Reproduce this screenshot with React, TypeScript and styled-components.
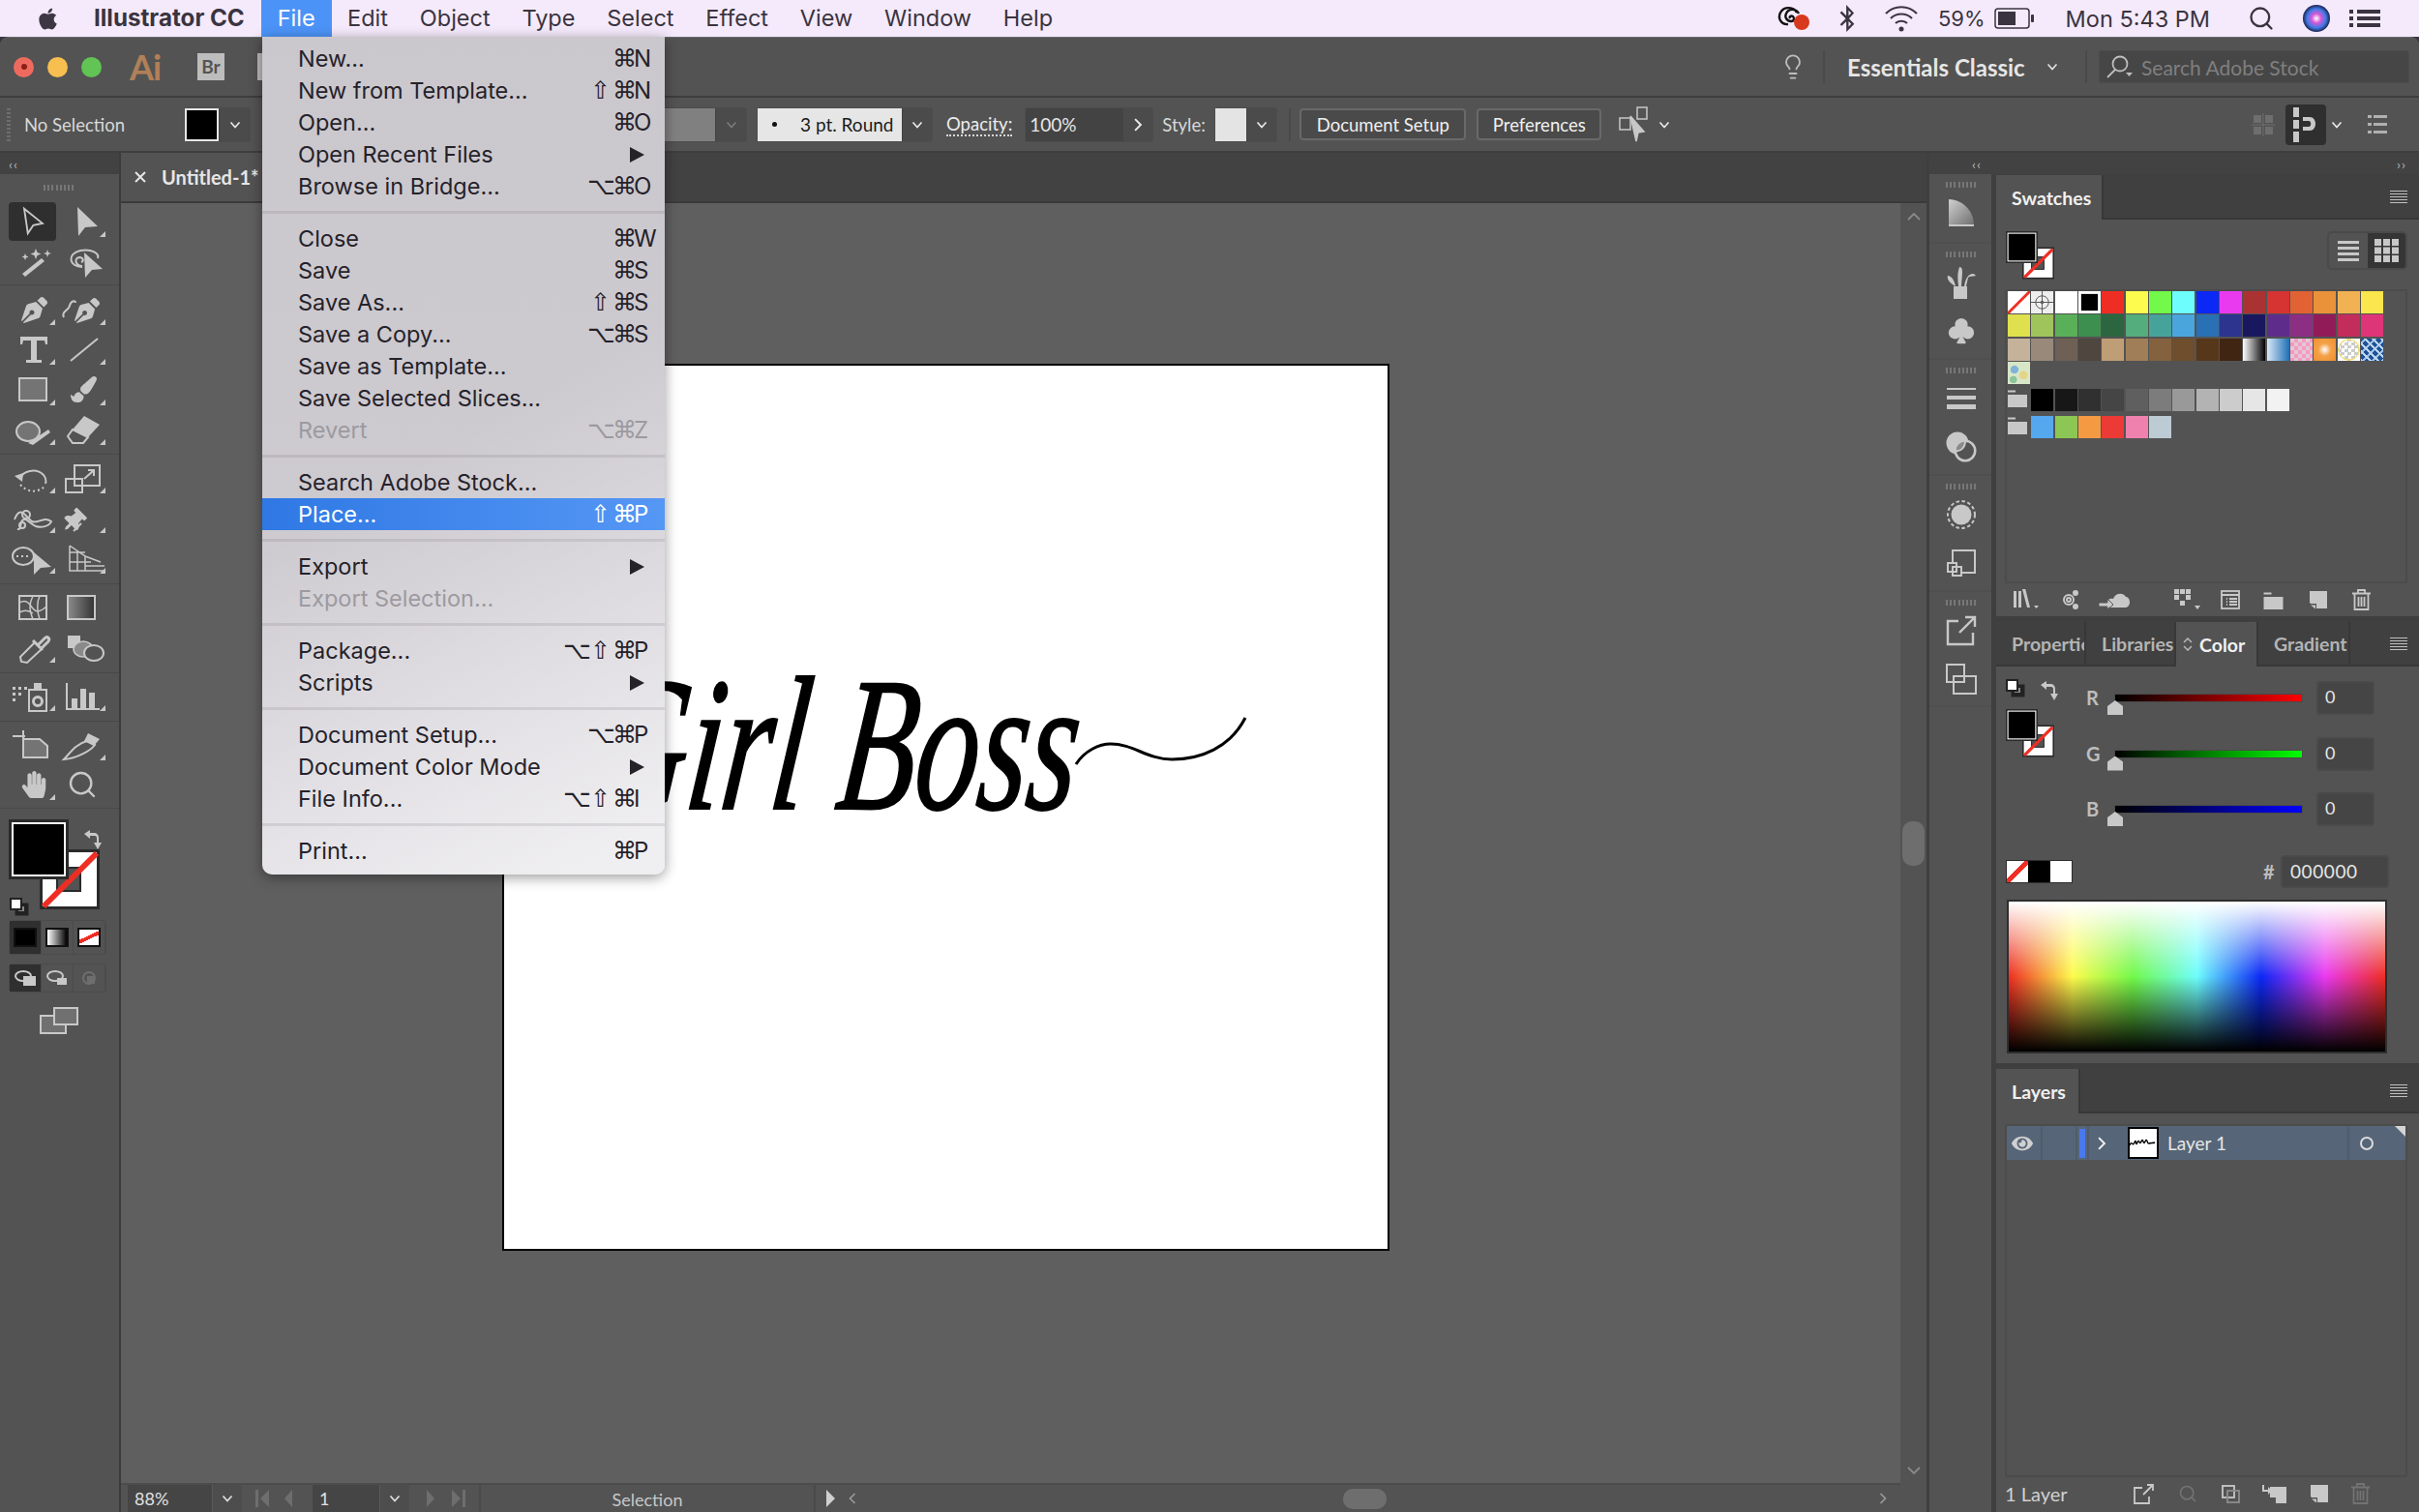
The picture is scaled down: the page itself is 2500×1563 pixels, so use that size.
import React from 'react';
import styled, { createGlobalStyle } from 'styled-components';
import { FaApple, FaBluetoothB, FaHandPaper, FaPaintBrush, FaPenNib, FaThumbtack, FaEye } from 'react-icons/fa';
import { BsSuitClubFill } from 'react-icons/bs';
import { Search, Lightbulb } from 'lucide-react';

const ui = `"Lato", "Noto Sans", sans-serif`;
const mac = `"Inter", "Liberation Sans", sans-serif`;
const ICON = '#c8c8c8';

const GlobalStyle = createGlobalStyle`
  html, body { margin: 0; padding: 0; background: #3b3640; overflow: hidden; }
  * { box-sizing: border-box; }
`;

const Screen = styled.div`
  position: relative;
  width: 2500px;
  height: 1563px;
  display: flex;
  flex-direction: column;
  overflow: hidden;
  font-family: ${ui};
`;

/* ---- mac menu bar ---- */
const MenuBar = styled.div`
  height: 38px;
  flex: none;
  display: flex;
  align-items: center;
  background: #f5eafb;
  color: #3a3440;
  font-family: ${mac};
  font-size: 23.5px;
  padding-left: 37px;
`;
const MenuTitle = styled.div<{ $bold?: boolean; $open?: boolean }>`
  height: 38px;
  line-height: 37px;
  padding: 0 ${(p) => (p.$open ? 17 : 16.4)}px;
  font-weight: ${(p) => (p.$bold ? 700 : 400)};
  color: ${(p) => (p.$open ? '#fff' : 'inherit')};
  background: ${(p) => (p.$open ? '#4c93f7' : 'transparent')};
`;
const AppName = styled(MenuTitle)`
  padding: 0 17px 0 35px;
  font-size: 24.2px;
`;
const StatusItems = styled.div`
  margin-left: auto;
  display: flex;
  align-items: center;
  height: 38px;
`;
const StatusSlot = styled.div<{ $ml: number }>`
  margin-left: ${(p) => p.$ml}px;
  display: flex;
  align-items: center;
`;
const BatteryPct = styled(StatusSlot)`
  font-size: 22px;
`;

/* ---- application window ---- */
const AppWindow = styled.div`
  flex: 1;
  display: flex;
  flex-direction: column;
  background: #535353;
  border-radius: 9px 9px 0 0;
  overflow: hidden;
  min-height: 0;
  border-top: 1px solid #6a6a6a;
`;
const TitleBar = styled.div`
  height: 62px;
  flex: none;
  display: flex;
  align-items: center;
  border-bottom: 2px solid #3e3e3e;
  padding-left: 14px;
`;
const Light = styled.div<{ $c: string }>`
  width: 21px;
  height: 21px;
  border-radius: 50%;
  background: ${(p) => p.$c};
  margin-right: 14px;
  display: flex;
  align-items: center;
  justify-content: center;
  &::after {
    content: '';
    width: 6px;
    height: 6px;
    border-radius: 50%;
    background: ${(p) => (p.$c === '#ef6a5e' ? '#8a1f18' : 'transparent')};
  }
`;
const AiMark = styled.div`
  font-size: 36px;
  font-weight: 700;
  color: #b08059;
  margin-left: 15px;
  width: 30px;
  letter-spacing: -1px;
`;
const BrBox = styled.div<{ $ml: number }>`
  margin-left: ${(p) => p.$ml}px;
  width: 28px;
  height: 28px;
  background: #bdbdbd;
  color: #555;
  font-size: 19px;
  font-weight: 700;
  text-align: center;
  line-height: 28px;
`;
const TitleRight = styled.div`
  margin-left: auto;
  display: flex;
  align-items: center;
  height: 100%;
  padding-right: 10px;
  color: #bdbdbd;
`;
const VRule = styled.div`
  width: 2px;
  height: 34px;
  background: #4a4a4a;
`;
const Workspace = styled.div`
  margin: 0 17px 0 23px;
  font-size: 24px;
  font-weight: 700;
  color: #e6e6e6;
  width: 189px;
  white-space: nowrap;
`;
const SearchStock = styled.div`
  margin-left: 12px;
  width: 321px;
  height: 34px;
  background: #464646;
  border: 1px solid #4c4c4c;
  border-radius: 3px;
  display: flex;
  align-items: center;
  padding-left: 6px;
  font-size: 21px;
  color: #7f7f7f;
`;
const ControlBar = styled.div`
  height: 57px;
  flex: none;
  display: flex;
  align-items: center;
  border-bottom: 2px solid #3e3e3e;
  font-size: 18.5px;
  color: #d8d8d8;
  position: relative;
`;
const GripV = styled.div`
  margin-left: 7px;
  width: 4px;
  height: 34px;
  background: repeating-linear-gradient(to bottom, #6e6e6e 0 2px, transparent 2px 4px);
`;
const PlainLabel = styled.div<{ $ml: number; $w?: number; $dotted?: boolean }>`
  margin-left: ${(p) => p.$ml}px;
  width: ${(p) => (p.$w ? `${p.$w}px` : 'auto')};
  white-space: nowrap;
  ${(p) => (p.$dotted ? 'border-bottom: 2px dotted #d8d8d8; color:#ececec; line-height: 22px;' : '')}
`;
const ComboBox = styled.div<{ $ml: number; $w: number }>`
  margin-left: ${(p) => p.$ml}px;
  width: ${(p) => p.$w}px;
  height: 36px;
  display: flex;
  align-items: stretch;
  background: #4b4b4b;
  border: 1px solid #4d4d4d;
  border-radius: 3px;
  flex: none;
`;
const ComboFill = styled.div<{ $c: string; $border?: string }>`
  flex: 1;
  background: ${(p) => p.$c};
  ${(p) => (p.$border ? `border: 2px solid ${p.$border};` : '')}
`;
const ComboValue = styled.div<{ $light?: boolean }>`
  flex: 1;
  display: flex;
  align-items: center;
  padding-left: ${(p) => (p.$light ? 15 : 4)}px;
  gap: 24px;
  background: ${(p) => (p.$light ? '#e6e6e6' : '#434343')};
  color: ${(p) => (p.$light ? '#1c1c1c' : '#e6e6e6')};
  font-size: 19px;
  white-space: nowrap;
`;
const Bullet = styled.span`
  width: 5px;
  height: 5px;
  border-radius: 50%;
  background: #111;
`;
const ComboBtn = styled.div<{ $w: number }>`
  width: ${(p) => p.$w}px;
  flex: none;
  display: flex;
  align-items: center;
  justify-content: center;
  border-left: 1px solid #444;
`;
const PushButton = styled.div<{ $ml: number; $w: number }>`
  margin-left: ${(p) => p.$ml}px;
  width: ${(p) => p.$w}px;
  height: 33px;
  flex: none;
  display: flex;
  align-items: center;
  justify-content: center;
  background: #4a4a4a;
  border: 2px solid #696969;
  border-radius: 4px;
  color: #f0f0f0;
  font-size: 18.5px;
`;
const ControlRight = styled.div`
  margin-left: auto;
  display: flex;
  align-items: center;
  padding-right: 33px;
`;
const AlignBox = styled.div`
  width: 42px;
  height: 42px;
  background: #2f2f2f;
  border-radius: 4px;
  margin: 0 5px 0 11px;
  display: flex;
  align-items: center;
  justify-content: center;
`;

const Body = styled.div`
  flex: 1;
  display: flex;
  min-height: 0;
`;

/* ---- left tools ---- */
const LeftDock = styled.div`
  width: 125px;
  flex: none;
  border-right: 2px solid #3c3c3c;
  display: flex;
  flex-direction: column;
`;
const CollapseStrip = styled.div<{ $end?: boolean }>`
  height: 22px;
  flex: none;
  background: #424242;
  display: flex;
  align-items: center;
  justify-content: ${(p) => (p.$end ? 'space-between' : 'flex-start')};
  padding: ${(p) => (p.$end ? '0 13px 0 44px' : '0 0 0 9px')};
  color: #b5b5b5;
  font-size: 14px;
  letter-spacing: 1px;
`;
const Grip = styled.div<{ $w: number; $h?: number }>`
  width: ${(p) => p.$w}px;
  height: ${(p) => p.$h ?? 6}px;
  background: repeating-linear-gradient(to right, #777 0 2px, transparent 2px 4.2px);
`;
const ToolGrip = styled.div`
  height: 28px;
  flex: none;
  display: flex;
  align-items: center;
  justify-content: center;
`;
const ToolGroup = styled.div<{ $pt: number; $pb: number }>`
  padding: ${(p) => p.$pt}px 9px ${(p) => p.$pb}px;
  border-bottom: 1px solid #484848;
`;
const ToolRow = styled.div`
  display: grid;
  grid-template-columns: 52px 52px;
  height: 41.5px;
  align-items: center;
`;
const ToolCell = styled.div<{ $active?: boolean }>`
  height: 40px;
  display: flex;
  align-items: center;
  border-radius: 4px;
  background: ${(p) => (p.$active ? '#2f2f2f' : 'transparent')};
  width: ${(p) => (p.$active ? '49px' : '52px')};
`;
const ColorWell = styled.div`
  position: relative;
  height: 102px;
  margin: 11px 0 0 9px;
`;
const WellOver = styled.div<{ $x: number; $y: number }>`
  position: absolute;
  left: ${(p) => p.$x}px;
  top: ${(p) => p.$y}px;
`;
const SegRow = styled.div<{ $h: number; $mt: number }>`
  height: ${(p) => p.$h}px;
  margin: ${(p) => p.$mt}px 13px 0 9px;
  display: grid;
  grid-template-columns: repeat(3, 1fr);
  border: 1px solid #4b4b4b;
  border-radius: 4px;
`;
const Seg = styled.div<{ $active?: boolean }>`
  display: flex;
  align-items: center;
  justify-content: center;
  background: ${(p) => (p.$active ? '#2f2f2f' : 'transparent')};
  border-right: 1px solid #4b4b4b;
`;
const SegChip = styled.div<{ $bg: string }>`
  width: 24px;
  height: 20px;
  background: ${(p) => p.$bg};
  border: 2px solid #111;
`;
const ScreenMode = styled.div`
  margin-top: 15px;
  display: flex;
  justify-content: center;
  padding-right: 2px;
`;

/* ---- centre ---- */
const Centre = styled.div`
  flex: 1;
  display: flex;
  flex-direction: column;
  min-width: 0;
`;
const DocTabs = styled.div`
  height: 52px;
  flex: none;
  background: #424242;
  border-bottom: 2px solid #3a3a3a;
  display: flex;
`;
const DocTab = styled.div`
  width: 200px;
  background: #535353;
  display: flex;
  align-items: center;
  padding-left: 14px;
  font-weight: 700;
  font-size: 20px;
  color: #e6e6e6;
  gap: 16px;
`;
const CanvasRow = styled.div`
  flex: 1;
  display: flex;
  min-height: 0;
`;
const CanvasCol = styled.div`
  flex: 1;
  display: flex;
  flex-direction: column;
  min-width: 0;
`;
const Canvas = styled.div`
  flex: 1;
  background: #5f5f5f;
  padding: 166px 0 0 394px;
  min-height: 0;
`;
const Artboard = styled.div`
  position: relative;
  width: 917px;
  height: 917px;
  background: #fff;
  border: 2px solid #000;
`;
const Lettering = styled.div`
  position: absolute;
  left: 112px;
  top: 268px;
  font-family: "Liberation Serif", serif;
  font-style: italic;
  font-size: 152px;
  line-height: 190px;
  color: #000;
  white-space: nowrap;
  transform-origin: left top;
  transform: scale(0.86, 1.3) skewX(-10deg);
  -webkit-text-stroke: 1.5px #000;
`;
const Flourish = styled.svg`
  position: absolute;
  left: 580px;
  top: 360px;
`;
const VScroll = styled.div`
  width: 27px;
  flex: none;
  background: #535353;
  display: flex;
  flex-direction: column;
  align-items: center;
  justify-content: space-between;
  padding: 7px 0 36px;
`;
const VThumb = styled.div`
  width: 23px;
  height: 46px;
  background: #6e6e6e;
  border-radius: 10px;
`;
const StatusBar = styled.div`
  height: 30px;
  flex: none;
  display: flex;
  align-items: stretch;
  background: #535353;
  border-top: 2px solid #4c4c4c;
  font-size: 18px;
  color: #e0e0e0;
`;
const StatusField = styled.div<{ $ml: number; $w: number }>`
  margin-left: ${(p) => p.$ml}px;
  width: ${(p) => p.$w}px;
  flex: none;
  background: #454545;
  display: flex;
  align-items: center;
  padding-left: 7px;
`;
const StatusChevron = styled.div`
  width: 31px;
  flex: none;
  display: flex;
  align-items: center;
  justify-content: center;
  border-left: 1px solid #5a5a5a;
  background: #4d4d4d;
`;
const StatusArrows = styled.div<{ $ml: number; $w: number }>`
  margin-left: ${(p) => p.$ml}px;
  width: ${(p) => p.$w}px;
  flex: none;
  display: flex;
  align-items: center;
`;
const StatusLabel = styled.div`
  margin-left: 14px;
  width: 348px;
  text-align: center;
  flex: none;
  color: #c8c8c8;
  line-height: 30px;
  border: solid #4a4a4a;
  border-width: 0 2px;
`;
const HScrollTrack = styled.div`
  flex: 1;
  display: flex;
  align-items: center;
  justify-content: center;
  padding-right: 6px;
`;
const HThumb = styled.div`
  width: 45px;
  height: 21px;
  background: #6e6e6e;
  border-radius: 10px;
`;

/* ---- right dock ---- */
const RightDock = styled.div`
  width: 509px;
  flex: none;
  display: flex;
  flex-direction: column;
  background: #3f3f3f;
  padding-left: 3px;
`;
const DockColumns = styled.div`
  flex: 1;
  display: flex;
  min-height: 0;
`;
const IconDock = styled.div`
  width: 64px;
  flex: none;
  margin-right: 5px;
  background: #4f4f4f;
  display: flex;
  flex-direction: column;
`;
const IconSection = styled.div<{ $h: number }>`
  height: ${(p) => p.$h}px;
  flex: none;
  background: #535353;
  padding: 8px 0 0 2px;
  margin-bottom: 2px;
  display: flex;
  flex-direction: column;
  align-items: center;
`;
const DockIcon = styled.div`
  height: 50px;
  display: flex;
  align-items: center;
  justify-content: center;
`;
const DockGrip = styled(Grip)`
  margin-bottom: 1px;
  height: 6px;
`;
const DockBlank = styled.div`
  flex: 1;
  background: #535353;
`;
const PanelStack = styled.div`
  flex: 1;
  display: flex;
  flex-direction: column;
  gap: 6px;
  padding-top: 1px;
`;
const Panel = styled.div<{ $h?: number }>`
  height: ${(p) => (p.$h ? `${p.$h}px` : 'auto')};
  flex: ${(p) => (p.$h ? 'none' : '1')};
  background: #535353;
  display: flex;
  flex-direction: column;
`;
const TabStrip = styled.div`
  height: 46px;
  flex: none;
  background: #404040;
  display: flex;
  align-items: stretch;
`;
const PanelTab = styled.div<{ $w: number; $active?: boolean; $pl?: number }>`
  width: ${(p) => p.$w}px;
  flex: none;
  display: flex;
  align-items: center;
  gap: 7px;
  overflow: hidden;
  white-space: nowrap;
  padding-left: ${(p) => p.$pl ?? 16}px;
  font-size: 19.5px;
  font-weight: 700;
  color: ${(p) => (p.$active ? '#f0f0f0' : '#b4b4b4')};
  background: ${(p) => (p.$active ? '#535353' : '#404040')};
  border-right: 2px solid #383838;
  border-bottom: ${(p) => (p.$active ? 'none' : '2px solid #383838')};
`;
const TabFill = styled.div`
  flex: 1;
  border-bottom: 2px solid #383838;
  display: flex;
  align-items: center;
  justify-content: flex-end;
  padding-right: 12px;
`;
const Hamburger = styled.div`
  width: 18px;
  height: 13px;
  background: repeating-linear-gradient(to bottom, #c0c0c0 0 1px, transparent 1px 3px);
`;

const SwatchHead = styled.div`
  display: flex;
  justify-content: space-between;
  padding: 12px 12px 0 10px;
  height: 72px;
`;
const ViewToggle = styled.div`
  width: 83px;
  height: 40px;
  display: grid;
  grid-template-columns: 1fr 1fr;
  border: 2px solid #4a4a4a;
  border-radius: 5px;
  overflow: hidden;
`;
const ViewBtn = styled.div<{ $active?: boolean }>`
  background: ${(p) => (p.$active ? '#353535' : 'transparent')};
  display: flex;
  align-items: center;
  justify-content: center;
`;
const SwatchList = styled.div`
  margin: 0 12px 0 9px;
  height: 305px;
  border: 2px solid #4c4c4c;
  padding: 0 0 0 1px;
`;
const SwatchGrid = styled.div`
  display: grid;
  grid-template-columns: repeat(16, 23px);
  grid-auto-rows: 23px;
  gap: 1.33px;
`;
const SwatchGroup = styled.div<{ $mt: number }>`
  display: grid;
  grid-template-columns: repeat(16, 23px);
  grid-auto-rows: 23px;
  gap: 1.33px;
  margin-top: ${(p) => p.$mt}px;
`;
const Swatch = styled.div<{ $c: string }>`
  background: ${(p) => p.$c};
  display: flex;
`;
const PanelFooter = styled.div<{ $pl: number }>`
  height: 34px;
  display: flex;
  align-items: center;
  padding-left: ${(p) => p.$pl}px;
  color: #d0d0d0;
  font-size: 20px;
`;
const FootSlot = styled.div<{ $ml: number }>`
  margin-left: ${(p) => p.$ml}px;
  display: flex;
  align-items: center;
`;

const ColorBody = styled.div`
  flex: 1;
  display: flex;
  flex-direction: column;
  padding: 4px 0 0 9px;
`;
const ColorTop = styled.div`
  display: flex;
  height: 172px;
`;
const ColorIcons = styled.div`
  position: relative;
  width: 84px;
  flex: none;
`;
const ColorIconAt = styled.div<{ $x: number; $y: number }>`
  position: absolute;
  left: ${(p) => p.$x}px;
  top: ${(p) => p.$y}px;
`;
const SliderRow = styled.div`
  height: 57.5px;
  display: flex;
  align-items: flex-start;
  padding-top: 11px;
`;
const ChannelLabel = styled.div`
  width: 30px;
  font-size: 20px;
  font-weight: 700;
  color: #bdbdbd;
  line-height: 34px;
`;
const SliderBox = styled.div`
  position: relative;
  width: 193px;
  padding-top: 14px;
`;
const SliderTrack = styled.div<{ $to: string }>`
  height: 7px;
  background: linear-gradient(to right, #000, ${(p) => p.$to});
  box-shadow: 0 0 0 1px #4a4a4a;
`;
const SliderThumb = styled.div`
  position: absolute;
  left: -8px;
  top: 20px;
  width: 16px;
  height: 15px;
  background: #c8c8c8;
  clip-path: polygon(50% 0, 100% 40%, 100% 100%, 0 100%, 0 40%);
`;
const NumBox = styled.div`
  margin-left: 15px;
  width: 60px;
  height: 35px;
  background: #454545;
  border: 2px solid #4a4a4a;
  border-radius: 4px;
  color: #e6e6e6;
  font-size: 18px;
  padding-left: 7px;
  line-height: 28px;
`;
const HexRow = styled.div`
  display: flex;
  align-items: center;
  height: 34px;
  margin-top: 19px;
`;
const TriChip = styled.div`
  width: 69px;
  height: 24px;
  display: grid;
  grid-template-columns: repeat(3, 1fr);
  border: 1px solid #2d2d2d;
  margin-left: 1px;
`;
const Chip = styled.div<{ $c: string }>`
  background: ${(p) => p.$c};
`;
const HashMark = styled.div`
  margin-left: 197px;
  width: 18px;
  font-size: 20px;
  font-weight: 700;
  color: #bdbdbd;
`;
const HexBox = styled.div`
  width: 112px;
  height: 34px;
  background: #454545;
  border: 2px solid #4a4a4a;
  border-radius: 4px;
  color: #e6e6e6;
  font-size: 19px;
  letter-spacing: 0.6px;
  padding-left: 8px;
  line-height: 29px;
`;
const Spectrum = styled.div`
  margin: 12px 0 0 2px;
  width: 393px;
  height: 159px;
  border: 2px solid #2e2e2e;
  background:
    linear-gradient(to bottom, #fff 0%, rgba(255, 255, 255, 0) 50%, rgba(0, 0, 0, 0) 50%, #000 100%),
    linear-gradient(to right, #ee2e24, #fdfb4d 17%, #72f94a 33%, #6dfdfd 50%, #0c28f5 67%, #ea3af0 84%, #ee2e24);
`;

const LayerList = styled.div`
  margin: 11px 12px 0 9px;
  height: 365px;
  border: 2px solid #4c4c4c;
  border-radius: 3px;
  position: relative;
`;
const LayerRow = styled.div`
  height: 35px;
  background: #566578;
  display: flex;
  align-items: center;
  color: #e6e6e6;
  font-size: 19px;
  position: relative;
  padding-left: 5px;
`;
const LayerDiv = styled.div<{ $ml: number }>`
  margin-left: ${(p) => p.$ml}px;
  width: 2px;
  height: 100%;
  background: #4f5c6d;
  flex: none;
`;
const LayerBar = styled.div`
  margin-left: 2px;
  width: 6px;
  height: 30px;
  background: #4a78ee;
  flex: none;
`;
const LayerThumb = styled.div`
  margin-left: 20px;
  width: 32px;
  height: 33px;
  background: #fff;
  border: 2px solid #000;
  display: flex;
  align-items: center;
  flex: none;
`;
const LayerName = styled.div`
  margin-left: 9px;
  width: 186px;
  flex: none;
`;
const LayerTarget = styled.div`
  margin-left: 11px;
  width: 14px;
  height: 14px;
  border: 2px solid #dcdcdc;
  border-radius: 50%;
`;
const CornerMark = styled.div`
  position: absolute;
  right: 0;
  top: 0;
  width: 11px;
  height: 11px;
  background: #d5d5d5;
  clip-path: polygon(0 0, 100% 0, 100% 100%);
`;

/* ---- open File menu ---- */
const FileMenu = styled.div`
  position: absolute;
  left: 271px;
  top: 38px;
  width: 416px;
  padding: 6px 0 8px;
  border-radius: 0 0 10px 10px;
  background:
    linear-gradient(150deg, rgba(255, 255, 255, 0) 48%, rgba(255, 255, 255, 0.62) 95%),
    linear-gradient(180deg, #cbc8cd 0%, #cdcad0 60%, #d6d3d9 100%);
  box-shadow: 0 3px 14px rgba(0, 0, 0, 0.4);
  font-family: ${mac};
  font-size: 23.5px;
  color: #25222a;
  z-index: 5;
`;
const MenuRow = styled.div<{ $on?: boolean; $off?: boolean }>`
  height: 33px;
  display: flex;
  align-items: center;
  justify-content: space-between;
  padding-left: 37px;
  color: ${(p) => (p.$on ? '#fff' : p.$off ? '#9c9a9f' : 'inherit')};
  background: ${(p) => (p.$on ? 'linear-gradient(to right, #2f78e4, #5597f5)' : 'transparent')};
`;
const MenuSep = styled.div`
  height: 21px;
  display: flex;
  align-items: center;
  &::after {
    content: '';
    width: 100%;
    height: 3px;
    background: rgba(90, 85, 95, 0.14);
  }
`;
const Keys = styled.div`
  display: flex;
  align-items: center;
  font-size: 24px;
`;
const Mod = styled.span<{ $w: number }>`
  width: ${(p) => p.$w}px;
  font-family: "DejaVu Sans", sans-serif;
  font-size: 25px;
  line-height: 30px;
  text-align: center;
`;
const KeyLetter = styled.span`
  width: 32px;
  white-space: nowrap;
`;
const SubArrow = styled.div`
  width: 0;
  height: 0;
  margin-right: 21px;
  border-left: 15px solid currentColor;
  border-top: 8px solid transparent;
  border-bottom: 8px solid transparent;
`;

/* ---- icons ---- */
const Chevron = ({ c = '#d8d8d8', dir = 'down', s = 12 }: { c?: string; dir?: string; s?: number }) => (
  <svg width={s} height={s} viewBox="0 0 12 12">
    <path d={dir === 'down' ? 'M1.5 3.5 6 8.5l4.5-5' : dir === 'right' ? 'M3.5 1 8.5 6l-5 5' : 'M8.5 1 3.5 6l5 5'} fill="none" stroke={c} strokeWidth="1.7" />
  </svg>
);

const Tool = ({ fly, children }: { fly?: boolean; children?: React.ReactNode }) => (
  <svg width="52" height="40" viewBox="0 0 52 40" fill={ICON} color={ICON}>
    {children}
    {fly && <polygon points="42,36 48,36 48,30" />}
  </svg>
);
const line = { fill: 'none', stroke: ICON, strokeWidth: 2 };

const tools: { fly?: boolean; node: React.ReactNode; active?: boolean }[][][] = [
  [
    [
      { active: true, node: <path d="M17 6 37 22l-10 2-6 9z" {...line} /> },
      { fly: true, node: <path d="M19 5l21 20-13 1-7 9z" /> },
    ],
    [
      { node: <g><path d="M14 33 34 17l3 3-20 16z" /><path d="M28 7l1.5 4 4 1.5-4 1.5-1.5 4-1.5-4-4-1.5 4-1.5zM40 8l1 3 3 1-3 1-1 3-1-3-3-1 3-1zM17 12l1 2.500 2.500 1-2.500 1-1 2.500-1-2.500-2.500-1 2.500-1z" /></g> },
      { node: <g><path d="M24 26C10 26 8 12 22 9c12-2 20 3 18 8M24 25c-7 0-9-8-3-9 4 0 5 4 2 5" {...line} /><path d="M26 11l19 17-11 1-7 8z" /></g> },
    ],
  ],
  [
    [
      { fly: true, node: <FaPenNib x="13" y="7" size="27" /> },
      { fly: true, node: <g><path d="M5 28c-3-6 5-7 6-12 1-5 6-6 6-3" {...line} /><FaPenNib x="16" y="8" size="26" /></g> },
    ],
    [
      { fly: true, node: <path d="M12 7h28v8h-2l-1-4h-8v20h5v3H18v-3h5V11h-8l-1 4h-2z" /> },
      { fly: true, node: <path d="M12 32 40 9" {...line} /> },
    ],
    [
      { fly: true, node: <rect x="11" y="8" width="28" height="23" fill="#747474" stroke={ICON} strokeWidth="2" /> },
      { fly: true, node: <FaPaintBrush x="12" y="6" size="27" /> },
    ],
    [
      { fly: true, node: <g><ellipse cx="20" cy="22" rx="12" ry="10" fill="#747474" stroke={ICON} strokeWidth="2" /><path d="M20 34l21-14 2 3-18 13z" /></g> },
      { fly: true, node: <g><path d="M26 6l16 9-12 13-16-8z" /><path d="M14 20l16 8-5 6H14l-5-7z" fill="#535353" stroke={ICON} strokeWidth="2" /></g> },
    ],
  ],
  [
    [
      { fly: true, node: <g><path d="M12 21c2-8 16-12 24-4 3 4 3 6 2 9" {...line} /><path d="M6 18l9-3-1 9z" /><path d="M12 27c8 9 18 8 25 2" fill="none" stroke={ICON} strokeWidth="2" strokeDasharray="2 3" /></g> },
      { fly: true, node: <g><rect x="7" y="21" width="17" height="14" fill="none" stroke={ICON} strokeWidth="2" /><rect x="16" y="7" width="26" height="21" fill="none" stroke={ICON} strokeWidth="2" /><path d="M26 21l9-8M30 12h6v6" {...line} /></g> },
    ],
    [
      { fly: true, node: <g><path d="M6 22c6-16 12-2 18 2 6 3 12-6 20 0-2 5-10 7-16 5-6-2-10-10-14-6-3 3 0 10-5 9" {...line} /><circle cx="18" cy="17" r="4" fill="none" stroke={ICON} strokeWidth="2" /><circle cx="14" cy="28" r="3" fill="none" stroke={ICON} strokeWidth="2" /></g> },
      { fly: true, node: <g transform="translate(15 6)"><FaThumbtack size="25" transform="rotate(45)" /><path d="M0 28 8 20" {...line} /></g> },
    ],
    [
      { fly: true, node: <g><ellipse cx="15" cy="18" rx="11" ry="9" {...line} /><path d="M8 18h14" fill="none" stroke={ICON} strokeWidth="2" strokeDasharray="2 3" /><path d="M26 14l18 15-11 1-7 7z" /></g> },
      { fly: true, node: <g {...line} strokeWidth="1.5"><path d="M11 7v26h36M11 7l16 11v15M11 14h16M11 24h22M19 12v21M27 18l16 6M27 28h20" /></g> },
    ],
  ],
  [
    [
      { node: <g {...line}><rect x="11" y="9" width="28" height="24" /><path d="M11 16c8-4 10 1 14 6s8 3 14-2M25 9c-4 8-4 14 0 24M32 9c-3 6-3 16 0 24M11 26c6-3 10-2 14 1" strokeWidth="1.5" /></g> },
      { node: <g><defs><linearGradient id="gr1"><stop offset="0" stopColor="#8c8c8c" /><stop offset="1" stopColor="#333" /></linearGradient></defs><rect x="9" y="9" width="28" height="24" fill="url(#gr1)" stroke={ICON} strokeWidth="2" /></g> },
    ],
    [
      { fly: true, node: <g {...line}><path d="M13 35l-1-5 15-15 7 7-15 14z" /><path d="M25 13l10 10M30 18l7-7c3-3 6 0 4 3l-7 7" strokeWidth="3" /></g> },
      { node: <g><rect x="9" y="8" width="13" height="13" /><ellipse cx="25" cy="22" rx="10" ry="8" fill="#8a8a8a" stroke={ICON} strokeWidth="1.5" /><ellipse cx="36" cy="26" rx="10" ry="8" fill="#535353" stroke={ICON} strokeWidth="2" /></g> },
    ],
  ],
  [
    [
      { fly: true, node: <g><path d="M4 11h3v3H4zM10 11h3v3h-3zM16 11h3v3h-3zM4 17h3v3H4zM10 17h3v3h-3zM4 23h3v3H4z" /><rect x="21" y="14" width="18" height="22" fill="#535353" stroke={ICON} strokeWidth="2" /><rect x="26" y="7" width="8" height="6" /><circle cx="30" cy="26" r="4.5" fill="none" stroke={ICON} strokeWidth="3" /></g> },
      { fly: true, node: <g><path d="M8 7v27h34" fill="none" stroke={ICON} strokeWidth="2" /><rect x="13" y="23" width="6" height="10" /><rect x="22" y="13" width="6" height="20" /><rect x="31" y="17" width="6" height="16" /></g> },
    ],
  ],
  [
    [
      { node: <g><path d="M4 11h13M15 5v12" {...line} /><path d="M15 17h17l8 7v12H15z" transform="translate(0 -3)" fill="#747474" stroke={ICON} strokeWidth="2" /></g> },
      { fly: true, node: <g><path d="M5 35c6-6 12-16 24-19l8 4C33 26 18 34 5 35z" {...line} /><path d="M30 8l12 6-6 7-10-5z" /></g> },
    ],
    [
      { fly: true, node: <FaHandPaper x="12" y="6" size="28" /> },
      { node: <Search x="8" y="4" width="32" height="32" strokeWidth="1.8" /> },
    ],
  ],
];

const FillStroke = ({ size }: { size: number }) => (
  <svg width={size} height={size} viewBox="0 0 94 94">
    <rect x="32" y="31" width="62" height="62" fill="#2a2a2a" />
    <rect x="35" y="34" width="56" height="56" fill="#fff" />
    <rect x="50" y="50" width="24" height="24" fill="#535353" stroke="#2a2a2a" strokeWidth="2" />
    <path d="M36 90 91 35" stroke="#ee2e24" strokeWidth="6" />
    <rect x="0" y="0" width="62" height="62" fill="#2a2a2a" />
    <rect x="3" y="3" width="56" height="56" fill="#fff" />
    <rect x="5" y="5" width="52" height="52" fill="#000" />
  </svg>
);
const Defaults = () => (
  <svg width="21" height="20" viewBox="0 0 21 20">
    <rect x="6" y="6" width="15" height="14" fill="#222" stroke="#555" />
    <rect x="10" y="10" width="6" height="5" fill="#888" />
    <rect x="1" y="1" width="13" height="13" fill="#222" />
    <rect x="3" y="3" width="9" height="9" fill="#fff" />
  </svg>
);
const SwapArrows = () => (
  <svg width="18" height="20" viewBox="0 0 18 20" fill={ICON}>
    <path d="M0 4l6-4v3h4c3 0 5 2 5 5v5h3l-4 7-4-7h3V8c0-1-1-2-2-2H6v3z" />
  </svg>
);

const swatchRows = [
  'NONE', 'REG', '#fff', 'BLACK', '#ee2e24', '#fdfb4d', '#72f94a', '#6dfdfd', '#0c28f5', '#ea3af0', '#ab3233', '#d63333', '#e26234', '#ea923a', '#f2b152', '#fbe64d',
  '#dfe04d', '#9ec45b', '#5ab059', '#3d8f4f', '#2b6640', '#54ad7c', '#45a39a', '#4ba5dd', '#2a70b5', '#2d348e', '#19185f', '#5e2d8c', '#8c2e84', '#911b58', '#c32d5c', '#de3578',
  '#c5b29b', '#98897b', '#6e6054', '#4f4640', '#c09e75', '#a07e58', '#84613f', '#6f4e2d', '#573719', '#3f2512',
  'linear-gradient(to right,#fff,#000)',
  'linear-gradient(to right,#d8e8f6,#1f6fb5)',
  'repeating-conic-gradient(#f49ac2 0 25%,#e4c8d4 0 50%) 0 0/8px 8px',
  'radial-gradient(circle,#fff 0,#f4a24a 40%,#ef8f2e 100%)',
  'radial-gradient(circle,transparent 60%,#f0dc7a 62%,#f0dc7a 68%,#fff 70%),repeating-conic-gradient(#ccc 0 25%,#fff 0 50%) 0 0/7px 7px',
  'repeating-linear-gradient(45deg,#bcd4ee 0 2px,transparent 2px 6px),repeating-linear-gradient(-45deg,#9fc0e4 0 2px,transparent 2px 7px),#1f5296',
  'radial-gradient(circle at 30% 35%,#7fb4d8 0 18%,transparent 20%),radial-gradient(circle at 70% 60%,#e4d48a 0 20%,transparent 22%),radial-gradient(circle at 25% 80%,#8cc49c 0 14%,transparent 16%),#d8e6c8',
];
const grays = ['#000', '#171717', '#303030', '#454545', '#5f5f5f', '#7c7c7c', '#999', '#b3b3b3', '#ccc', '#e6e6e6', '#f2f2f2'];
const brights = ['#56a8ee', '#8cc654', '#f49a42', '#ec3a36', '#ef81ae', '#bccbd4'];

const NoneSwatch = () => (
  <svg width="23" height="23" viewBox="0 0 24 24">
    <rect width="24" height="24" fill="#fff" />
    <path d="M0 24 24 0" stroke="#ee2e24" strokeWidth="3" />
  </svg>
);
const RegSwatch = () => (
  <svg width="23" height="23" viewBox="0 0 24 24" fill="none" stroke="#555" strokeWidth="1">
    <rect width="24" height="24" fill="#eee" stroke="none" />
    <circle cx="12" cy="12" r="7" />
    <circle cx="12" cy="12" r="1.500" />
    <path d="M0 12h24M12 0v24" />
  </svg>
);
const BlackSwatch = () => (
  <svg width="23" height="23" viewBox="0 0 24 24">
    <rect width="24" height="24" fill="#fff" />
    <rect x="3" y="3" width="18" height="18" fill="#000" />
  </svg>
);
const FolderIcon = ({ w = 20, h = 19 }: { w?: number; h?: number }) => (
  <svg width={w} height={h} viewBox="0 0 20 19" fill={ICON}>
    <rect x="0" y="6" width="20" height="13" />
    <rect x="0" y="1.500" width="8" height="2" />
  </svg>
);
const TrashIcon = ({ c = ICON }: { c?: string }) => (
  <svg width="19" height="22" viewBox="0 0 19 22" fill="none" stroke={c} strokeWidth="1.8">
    <path d="M0 4.500h19M6 4V1h7v3M2.500 5v16h14V5M6.500 8v10M9.500 8v10M12.500 8v10" />
  </svg>
);
const NewItem = () => (
  <svg width="19" height="19" viewBox="0 0 19 19" fill={ICON}>
    <path d="M0 0h18v18H7V13H1L0 12z" />
    <path d="M1 14.500l5 4v-4z" />
  </svg>
);
const swatchFooter: { ml: number; node: React.ReactNode }[] = [
  { ml: 0, node: <svg width="26" height="22" viewBox="0 0 26 22" fill={ICON}><path d="M0 2h3v17H0zM5 2h3v17H5zM9 0l3-1 5 20h-3zM21 17h5l-2.500 3z" /></svg> },
  { ml: 24, node: <svg width="17" height="20" viewBox="0 0 17 20" fill="none" stroke={ICON} strokeWidth="2"><circle cx="7" cy="10" r="5" /><circle cx="7" cy="10" r="2" /><circle cx="14" cy="3" r="2" fill={ICON} /><circle cx="14" cy="17" r="2" fill={ICON} /></svg> },
  { ml: 21, node: <svg width="33" height="20" viewBox="0 0 33 20" fill={ICON}><path d="M8 18c-1-9 5-10 7-9 2-6 10-7 13-2 5 0 6 11-1 11z" /><path d="M0 13h9V9l6 6-6 5v-3H0z" stroke="#535353" /></svg> },
  { ml: 45, node: <svg width="28" height="22" viewBox="0 0 28 22"><g fill={ICON}><rect width="17" height="17" fill="none" /><path d="M0 0h5v5H0zM6 0h5v5H6zM12 0h5v5h-5zM0 6h5v5H0zM12 6h5v5h-5zM6 12h5v5H6zM21 17h6l-3 4z" /></g></svg> },
  { ml: 20, node: <svg width="20" height="20" viewBox="0 0 20 20" fill="none" stroke={ICON} strokeWidth="1.800"><rect x="1" y="1" width="18" height="18" /><path d="M1 5h18M6 9h1M9 9h8M6 12h1M9 12h8M6 15h1M9 15h8" /></svg> },
  { ml: 23, node: <FolderIcon w={23} h={19} /> },
  { ml: 26, node: <NewItem /> },
  { ml: 25, node: <TrashIcon /> },
];
const layerFooter: { ml: number; node: React.ReactNode }[] = [
  { ml: 68, node: <svg width="21" height="21" viewBox="0 0 21 21" fill="none" stroke={ICON} strokeWidth="1.800"><path d="M9 4H1v16h15v-7M10 11 20 1M14 1h6v6" /></svg> },
  { ml: 25, node: <Search width="20" height="20" color="#737373" strokeWidth="2" /> },
  { ml: 25, node: <svg width="19" height="19" viewBox="0 0 19 19" fill="none" stroke={ICON} strokeWidth="1.800"><rect x="1" y="1" width="12" height="12" /><rect x="6" y="6" width="12" height="12" stroke="#8d8d8d" /></svg> },
  { ml: 23, node: <svg width="25" height="19" viewBox="0 0 25 19" fill={ICON}><path d="M8 2h17v17H14v-6H8zM0 0h2v5h4V2l4 4-4 4V7H0z" /></svg> },
  { ml: 25, node: <NewItem /> },
  { ml: 23, node: <TrashIcon c="#737373" /> },
];

type Item = { label: string; keys?: string; sub?: boolean; off?: boolean; on?: boolean };
const menu: Item[][] = [
  [
    { label: 'New...', keys: '⌘N' },
    { label: 'New from Template...', keys: '⇧⌘N' },
    { label: 'Open...', keys: '⌘O' },
    { label: 'Open Recent Files', sub: true },
    { label: 'Browse in Bridge...', keys: '⌥⌘O' },
  ],
  [
    { label: 'Close', keys: '⌘W' },
    { label: 'Save', keys: '⌘S' },
    { label: 'Save As...', keys: '⇧⌘S' },
    { label: 'Save a Copy...', keys: '⌥⌘S' },
    { label: 'Save as Template...' },
    { label: 'Save Selected Slices...' },
    { label: 'Revert', keys: '⌥⌘Z', off: true },
  ],
  [
    { label: 'Search Adobe Stock...' },
    { label: 'Place...', keys: '⇧⌘P', on: true },
  ],
  [
    { label: 'Export', sub: true },
    { label: 'Export Selection...', off: true },
  ],
  [
    { label: 'Package...', keys: '⌥⇧⌘P' },
    { label: 'Scripts', sub: true },
  ],
  [
    { label: 'Document Setup...', keys: '⌥⌘P' },
    { label: 'Document Color Mode', sub: true },
    { label: 'File Info...', keys: '⌥⇧⌘I' },
  ],
  [{ label: 'Print...', keys: '⌘P' }],
];
const modWidth: Record<string, number> = { '⌘': 22, '⇧': 25, '⌥': 26 };

const ShortcutKeys = ({ keys }: { keys: string }) => {
  const chars = Array.from(keys);
  const letter = chars.pop();
  return (
    <Keys>
      {chars.map((c) => (
        <Mod key={c} $w={modWidth[c]}>{c}</Mod>
      ))}
      <KeyLetter>{letter}</KeyLetter>
    </Keys>
  );
};

const FileMenuPanel = () => (
  <FileMenu>
    {menu.map((group, i) => (
      <React.Fragment key={group[0].label}>
        {i > 0 && <MenuSep />}
        {group.map((it) => (
          <MenuRow key={it.label} $on={it.on} $off={it.off}>
            <span>{it.label}</span>
            {it.keys && <ShortcutKeys keys={it.keys} />}
            {it.sub && <SubArrow />}
          </MenuRow>
        ))}
      </React.Fragment>
    ))}
  </FileMenu>
);

const TopBar = () => (
  <MenuBar>
    <FaApple size={25} color="#3d3743" />
    <AppName $bold>Illustrator CC</AppName>
    <MenuTitle $open>File</MenuTitle>
    {['Edit', 'Object', 'Type', 'Select', 'Effect', 'View', 'Window', 'Help'].map((m) => (
      <MenuTitle key={m}>{m}</MenuTitle>
    ))}
    <StatusItems>
      <StatusSlot $ml={0}>
        <svg width="36" height="28" viewBox="0 0 36 28" fill="none" stroke="#111" strokeWidth="2.400">
          <path d="M22 8C19 2 9 1 5 8c-3 6 1 13 8 12M24 9c-3-6-11-5-13 0-2 4 1 8 5 8 3 0 4-3 2-5-2-1-4 0-3 2" />
          <circle cx="27" cy="18" r="8" fill="#d7391f" stroke="none" />
        </svg>
      </StatusSlot>
      <StatusSlot $ml={24}><FaBluetoothB size={28} color="#3a3440" /></StatusSlot>
      <StatusSlot $ml={24}>
        <svg width="36" height="28" viewBox="0 0 36 28" fill="none" stroke="#3a3440" strokeWidth="2.200">
          <path d="M2 9c9-9 23-9 32 0M7 14c6-6 16-6 22 0M12 19c3-3 9-3 12 0" />
          <circle cx="18" cy="25" r="2.500" fill="#3a3440" stroke="none" />
        </svg>
      </StatusSlot>
      <BatteryPct $ml={20}>59%</BatteryPct>
      <StatusSlot $ml={9}>
        <svg width="41" height="22" viewBox="0 0 41 22">
          <rect x="1" y="1" width="35" height="20" rx="3" fill="none" stroke="#3a3440" strokeWidth="1.500" />
          <rect x="4" y="4" width="18" height="14" fill="#3a3440" />
          <rect x="38" y="7" width="3" height="8" rx="1" fill="#3a3440" />
        </svg>
      </StatusSlot>
      <StatusSlot $ml={33}>Mon 5:43 PM</StatusSlot>
      <StatusSlot $ml={39}>
        <Search width="28" height="28" color="#3a3440" strokeWidth="2" />
      </StatusSlot>
      <StatusSlot $ml={29}>
        <svg width="28" height="28" viewBox="0 0 28 28">
          <defs>
            <radialGradient id="siri"><stop offset="0" stopColor="#fff" /><stop offset=".35" stopColor="#d557d8" /><stop offset=".7" stopColor="#3f7be8" /><stop offset="1" stopColor="#1c2350" /></radialGradient>
          </defs>
          <circle cx="14" cy="14" r="14" fill="url(#siri)" />
        </svg>
      </StatusSlot>
      <StatusSlot $ml={20}>
        <svg width="32" height="22" viewBox="0 0 32 22" fill="#3a3440">
          <path d="M0 2h4v4H0zM8 2h24v4H8zM0 9h4v4H0zM8 9h24v4H8zM0 16h4v4H0zM8 16h24v4H8z" />
        </svg>
      </StatusSlot>
      <StatusSlot $ml={40} />
    </StatusItems>
  </MenuBar>
);

const Titlebar = () => (
  <TitleBar>
    <Light $c="#ef6a5e" />
    <Light $c="#f6bf4f" />
    <Light $c="#61c454" />
    <AiMark>Ai</AiMark>
    <BrBox $ml={40}>Br</BrBox>
    <BrBox $ml={34} />
    <TitleRight>
      <Lightbulb width="28" height="30" strokeWidth="1.600" color="#bdbdbd" />
      <StatusSlot $ml={17}><VRule /></StatusSlot>
      <Workspace>Essentials Classic</Workspace>
      <Chevron c="#e0e0e0" />
      <StatusSlot $ml={28}><VRule /></StatusSlot>
      <SearchStock>
        <svg width="28" height="24" viewBox="0 0 28 24" fill="none" stroke="#bdbdbd" strokeWidth="1.800">
          <circle cx="15" cy="9" r="7.500" />
          <path d="M10 15 2 23" />
          <path d="M21 18h7l-3.500 4z" fill="#bdbdbd" stroke="none" />
        </svg>
        <StatusSlot $ml={9}>Search Adobe Stock</StatusSlot>
      </SearchStock>
    </TitleRight>
  </TitleBar>
);

const Controlbar = () => (
  <ControlBar>
    <GripV />
    <PlainLabel $ml={14} $w={165}>No Selection</PlainLabel>
    <ComboBox $ml={0} $w={69}>
      <ComboFill $c="#000" $border="#e6e6e6" />
      <ComboBtn $w={32}><Chevron c="#e8e8e8" /></ComboBtn>
    </ComboBox>
    <ComboBox $ml={12} $w={501}>
      <ComboFill $c="#808080" />
      <ComboBtn $w={32}><Chevron c="#7a7a7a" /></ComboBtn>
    </ComboBox>
    <ComboBox $ml={10} $w={182}>
      <ComboValue $light><Bullet />3 pt. Round</ComboValue>
      <ComboBtn $w={31}><Chevron c="#e8e8e8" /></ComboBtn>
    </ComboBox>
    <PlainLabel $ml={14} $dotted>Opacity:</PlainLabel>
    <ComboBox $ml={13} $w={133}>
      <ComboValue>100%</ComboValue>
      <ComboBtn $w={31}><Chevron dir="right" c="#e8e8e8" s={14} /></ComboBtn>
    </ComboBox>
    <PlainLabel $ml={9} $w={46}>Style:</PlainLabel>
    <ComboBox $ml={8} $w={65}>
      <ComboFill $c="#e4e4e4" />
      <ComboBtn $w={31}><Chevron c="#e8e8e8" /></ComboBtn>
    </ComboBox>
    <StatusSlot $ml={12}><VRule /></StatusSlot>
    <PushButton $ml={9} $w={172}>Document Setup</PushButton>
    <PushButton $ml={11} $w={129}>Preferences</PushButton>
    <StatusSlot $ml={18}>
      <svg width="32" height="38" viewBox="0 0 32 38" fill="none" stroke={ICON} strokeWidth="1.500">
        <rect x="1" y="12" width="11" height="12" />
        <rect x="19" y="1" width="10" height="12" />
        <path d="M12 10l14 16-6 1-2 9z" fill={ICON} />
      </svg>
    </StatusSlot>
    <StatusSlot $ml={9}><Chevron c="#e8e8e8" /></StatusSlot>
    <ControlRight>
      <svg width="24" height="24" viewBox="0 0 24 24" fill="#6e6e6e">
        <path d="M2 2h8v8H2zM14 2h8v8h-8zM2 14h8v8H2zM14 14h8v8h-8z" />
        <path d="M0 12h24M12 0v24" stroke="#6e6e6e" />
      </svg>
      <AlignBox>
        <svg width="26" height="36" viewBox="0 0 26 36" fill={ICON}>
          <path d="M0 0h6v10H0zM0 13h6v9H0zM0 25h6v11H0z" />
          <path d="M10 10h7c8 0 8 14 0 14h-7v-4h6c3 0 3-6 0-6h-6z" />
        </svg>
      </AlignBox>
      <Chevron c="#e8e8e8" />
      <StatusSlot $ml={26}>
        <svg width="20" height="22" viewBox="0 0 20 22" fill={ICON}>
          <path d="M0 1h4v3H0zM6 1h14v3H6zM0 9h4v3H0zM6 9h14v3H6zM0 17h4v3H0zM6 17h14v3H6z" opacity=".8" />
        </svg>
      </StatusSlot>
    </ControlRight>
  </ControlBar>
);

const toolPadding = [[0, 3], [4, 4], [3, 5], [3, 5], [3, 5], [3, 3]];

const ToolPanel = () => (
  <LeftDock>
    <CollapseStrip>‹‹</CollapseStrip>
    <ToolGrip><Grip $w={33} /></ToolGrip>
    {tools.map((group, g) => (
      <ToolGroup key={g} $pt={toolPadding[g][0]} $pb={toolPadding[g][1]}>
        {group.map((row, r) => (
          <ToolRow key={r}>
            {row.map((t, c) => (
              <ToolCell key={c} $active={t.active}>
                <Tool fly={t.fly}>{t.node}</Tool>
              </ToolCell>
            ))}
          </ToolRow>
        ))}
      </ToolGroup>
    ))}
    <ColorWell>
      <FillStroke size={94} />
      <WellOver $x={78} $y={11}><SwapArrows /></WellOver>
      <WellOver $x={0} $y={80}><Defaults /></WellOver>
    </ColorWell>
    <SegRow $h={36} $mt={2}>
      <Seg $active><SegChip $bg="#000" /></Seg>
      <Seg><SegChip $bg="linear-gradient(to right,#fff,#000)" /></Seg>
      <Seg><SegChip $bg="linear-gradient(155deg,#fff 42%,#ee2e24 42% 58%,#fff 58%)" /></Seg>
    </SegRow>
    <SegRow $h={30} $mt={9}>
      <Seg $active>
        <svg width="22" height="16" viewBox="0 0 22 16" fill="none" stroke={ICON} strokeWidth="2"><ellipse cx="9" cy="6" rx="8" ry="5" /><rect x="10" y="7" width="11" height="8" fill={ICON} /></svg>
      </Seg>
      <Seg>
        <svg width="22" height="16" viewBox="0 0 22 16" fill="none" stroke={ICON} strokeWidth="2"><ellipse cx="9" cy="6" rx="8" ry="5" /><rect x="11" y="8" width="10" height="7" fill={ICON} stroke="none" /></svg>
      </Seg>
      <Seg>
        <svg width="16" height="16" viewBox="0 0 16 16" fill="none" stroke="#6e6e6e" strokeWidth="2"><circle cx="8" cy="8" r="6" /><rect x="7" y="7" width="6" height="6" fill="#6e6e6e" /></svg>
      </Seg>
    </SegRow>
    <ScreenMode>
      <svg width="40" height="28" viewBox="0 0 40 28" fill="#707070" stroke={ICON} strokeWidth="2">
        <rect x="1" y="9" width="26" height="18" />
        <rect x="15" y="1" width="24" height="17" />
      </svg>
    </ScreenMode>
  </LeftDock>
);

const RightIcons = () => (
  <IconDock>
    <IconSection $h={70}>
      <DockGrip $w={33} />
      <DockIcon>
        <svg width="28" height="30" viewBox="0 0 28 30">
          <defs><linearGradient id="fan" x1="0" x2="1" y1="0" y2="1"><stop offset="0" stopColor="#d0d0d0" /><stop offset="1" stopColor="#6e6e6e" /></linearGradient></defs>
          <path d="M1 1c14 0 26 12 26 27H1z" fill="url(#fan)" />
          <path d="M1 28h26" stroke={ICON} strokeWidth="2" />
        </svg>
      </DockIcon>
    </IconSection>
    <IconSection $h={118}>
      <DockGrip $w={33} />
      <DockIcon>
        <svg width="30" height="36" viewBox="0 0 30 36" fill={ICON}>
          <rect x="7" y="22" width="14" height="13" />
          <path d="M12 22c-1-8-1-14 1-20 3 0 3 3 3 6l-1 14zM9 22C2 18 0 14 1 11c4 0 7 5 8 11zM18 22c1-8 4-12 8-13 3 0 3 1 4 2-3 1-6 0-8 2l-2 9z" />
        </svg>
      </DockIcon>
      <DockIcon><BsSuitClubFill size={30} color={ICON} /></DockIcon>
    </IconSection>
    <IconSection $h={118}>
      <DockGrip $w={33} />
      <DockIcon>
        <svg width="30" height="22" viewBox="0 0 30 22" fill={ICON}><path d="M0 0h30v2H0zM0 8h30v4H0zM0 17h30v5H0z" /></svg>
      </DockIcon>
      <DockIcon>
        <svg width="32" height="32" viewBox="0 0 32 32">
          <circle cx="12" cy="12" r="11.500" fill={ICON} />
          <circle cx="20" cy="20" r="10.500" fill="#8a8a8a" stroke={ICON} strokeWidth="2" />
          <path d="M20 10a10 10 0 1 1-10 10c6 1 10-4 10-10" fill="#535353" stroke={ICON} strokeWidth="2" />
        </svg>
      </DockIcon>
    </IconSection>
    <IconSection $h={118}>
      <DockGrip $w={33} />
      <DockIcon>
        <svg width="30" height="30" viewBox="0 0 30 30">
          <circle cx="15" cy="15" r="10.500" fill={ICON} />
          <circle cx="15" cy="15" r="14" fill="none" stroke={ICON} strokeWidth="2" strokeDasharray="3.500 2.500" />
        </svg>
      </DockIcon>
      <DockIcon>
        <svg width="30" height="28" viewBox="0 0 30 28" fill="none" stroke={ICON} strokeWidth="2">
          <path d="M6 14V1h23v23H16" />
          <rect x="1" y="14" width="9" height="9" />
          <rect x="6" y="18" width="9" height="9" />
        </svg>
      </DockIcon>
    </IconSection>
    <IconSection $h={117}>
      <DockGrip $w={33} />
      <DockIcon>
        <svg width="32" height="32" viewBox="0 0 32 32" fill="none" stroke={ICON} strokeWidth="2.400">
          <path d="M13 6H2v24h26V18M14 18 30 2M20 2h10v10" />
        </svg>
      </DockIcon>
      <DockIcon>
        <svg width="32" height="32" viewBox="0 0 32 32" fill="none" stroke={ICON} strokeWidth="2">
          <rect x="1" y="1" width="18" height="18" />
          <rect x="8" y="13" width="23" height="18" />
        </svg>
      </DockIcon>
    </IconSection>
    <DockBlank />
  </IconDock>
);

const SwatchesPanel = () => (
  <Panel $h={456}>
    <TabStrip>
      <PanelTab $w={111} $active>Swatches</PanelTab>
      <TabFill><Hamburger /></TabFill>
    </TabStrip>
    <SwatchHead>
      <FillStroke size={50} />
      <ViewToggle>
        <ViewBtn>
          <svg width="22" height="22" viewBox="0 0 22 22" fill={ICON}><path d="M0 1h22v3H0zM0 7h22v3H0zM0 13h22v3H0zM0 19h22v3H0z" /></svg>
        </ViewBtn>
        <ViewBtn $active>
          <svg width="25" height="24" viewBox="0 0 25 24" fill={ICON}><path d="M0 0h7v7H0zM9 0h7v7H9zM18 0h7v7h-7zM0 8.500h7v7H0zM9 8.500h7v7H9zM18 8.500h7v7h-7zM0 17h7v7H0zM9 17h7v7H9zM18 17h7v7h-7z" /></svg>
        </ViewBtn>
      </ViewToggle>
    </SwatchHead>
    <SwatchList>
      <SwatchGrid>
        {swatchRows.map((c, i) => (
          <Swatch key={i} $c={c === 'NONE' || c === 'REG' || c === 'BLACK' ? '#fff' : c}>
            {c === 'NONE' && <NoneSwatch />}
            {c === 'REG' && <RegSwatch />}
            {c === 'BLACK' && <BlackSwatch />}
          </Swatch>
        ))}
      </SwatchGrid>
      <SwatchGroup $mt={5}>
        <FolderIcon />
        {grays.map((c) => <Swatch key={c} $c={c} />)}
      </SwatchGroup>
      <SwatchGroup $mt={5}>
        <FolderIcon />
        {brights.map((c) => <Swatch key={c} $c={c} />)}
      </SwatchGroup>
    </SwatchList>
    <PanelFooter $pl={18}>
      {swatchFooter.map((f, i) => <FootSlot key={i} $ml={f.ml}>{f.node}</FootSlot>)}
    </PanelFooter>
  </Panel>
);

const channels: [string, string][] = [['R', '#ff0000'], ['G', '#00ff00'], ['B', '#0000ff']];

const ColorPanel = () => (
  <Panel $h={456}>
    <TabStrip>
      <PanelTab $w={93}>Properties</PanelTab>
      <PanelTab $w={93} $pl={16}>Libraries</PanelTab>
      <PanelTab $w={85} $pl={7} $active>
        <svg width="10" height="14" viewBox="0 0 10 14" fill="none" stroke="#b4b4b4" strokeWidth="1.600"><path d="M1 5l4-4 4 4M1 9l4 4 4-4" /></svg>
        Color
      </PanelTab>
      <PanelTab $w={95}>Gradient</PanelTab>
      <TabFill><Hamburger /></TabFill>
    </TabStrip>
    <ColorBody>
      <ColorTop>
        <ColorIcons>
          <ColorIconAt $x={0} $y={8}><Defaults /></ColorIconAt>
          <ColorIconAt $x={37} $y={11}><SwapArrows /></ColorIconAt>
          <ColorIconAt $x={1} $y={40}><FillStroke size={50} /></ColorIconAt>
        </ColorIcons>
        <div>
          {channels.map(([n, to]) => (
            <SliderRow key={n}>
              <ChannelLabel>{n}</ChannelLabel>
              <SliderBox>
                <SliderTrack $to={to} />
                <SliderThumb />
              </SliderBox>
              <NumBox>0</NumBox>
            </SliderRow>
          ))}
        </div>
      </ColorTop>
      <HexRow>
        <TriChip>
          <Chip $c="linear-gradient(135deg,#fff 42%,#ee2e24 42% 58%,#fff 58%)" />
          <Chip $c="#000" />
          <Chip $c="#fff" />
        </TriChip>
        <HashMark>#</HashMark>
        <HexBox>000000</HexBox>
      </HexRow>
      <Spectrum />
    </ColorBody>
  </Panel>
);

const LayersPanel = () => (
  <Panel>
    <TabStrip>
      <PanelTab $w={87} $active>Layers</PanelTab>
      <TabFill><Hamburger /></TabFill>
    </TabStrip>
    <LayerList>
      <LayerRow>
        <FaEye size={22} color="#d0d0d0" />
        <LayerDiv $ml={8} />
        <LayerDiv $ml={34} />
        <LayerBar />
        <LayerDiv $ml={2} />
        <StatusSlot $ml={6}><Chevron dir="right" c="#f0f0f0" s={14} /></StatusSlot>
        <LayerThumb>
          <svg width="28" height="10" viewBox="0 0 28 10" fill="none" stroke="#000" strokeWidth="1.400">
            <path d="M0 7c2-6 3 2 5-3s1 5 3 0 2 4 4-1 2 5 4 0 2 3 4 2 4 0 6-1" />
          </svg>
        </LayerThumb>
        <LayerName>Layer 1</LayerName>
        <LayerDiv $ml={0} />
        <LayerTarget />
        <CornerMark />
      </LayerRow>
    </LayerList>
    <PanelFooter $pl={9}>
      1 Layer
      {layerFooter.map((f, i) => <FootSlot key={i} $ml={f.ml}>{f.node}</FootSlot>)}
    </PanelFooter>
  </Panel>
);

export default function App() {
  return (
    <Screen>
      <GlobalStyle />
      <TopBar />
      <AppWindow>
        <Titlebar />
        <Controlbar />
        <Body>
          <ToolPanel />
          <Centre>
            <DocTabs>
              <DocTab>
                <svg width="12" height="12" viewBox="0 0 12 12" stroke="#e6e6e6" strokeWidth="2"><path d="M1 1l10 10M11 1 1 11" /></svg>
                Untitled-1*
              </DocTab>
            </DocTabs>
            <CanvasRow>
              <CanvasCol>
                <Canvas>
                  <Artboard>
                    <Lettering>Girl Boss</Lettering>
                    <Flourish width="200" height="70" viewBox="0 0 200 70" fill="none" stroke="#000" strokeWidth="3">
                      <path d="M11 52C20 38 35 31 47 31c23 0 38 16 63 16 30 0 60-12 76-43" />
                    </Flourish>
                  </Artboard>
                </Canvas>
                <StatusBar>
                  <StatusField $ml={7} $w={87}>88%</StatusField>
                  <StatusChevron><Chevron c="#e0e0e0" /></StatusChevron>
                  <StatusArrows $ml={14} $w={46}>
                    <svg width="46" height="18" viewBox="0 0 46 18" fill="#6e6e6e"><path d="M0 0h3v18H0zM14 0v18L5 9zM38 0v18l-8-9z" /></svg>
                  </StatusArrows>
                  <StatusField $ml={13} $w={69}>1</StatusField>
                  <StatusChevron><Chevron c="#e0e0e0" /></StatusChevron>
                  <StatusArrows $ml={18} $w={40}>
                    <svg width="40" height="18" viewBox="0 0 40 18" fill="#6e6e6e"><path d="M0 0v18l8-9zM26 0v18l9-9zM37 0h3v18h-3z" /></svg>
                  </StatusArrows>
                  <StatusLabel>Selection</StatusLabel>
                  <StatusArrows $ml={11} $w={20}>
                    <svg width="9" height="18" viewBox="0 0 9 18" fill="#d0d0d0"><path d="M0 0v18l9-9z" /></svg>
                  </StatusArrows>
                  <StatusArrows $ml={1} $w={12}><Chevron dir="left" c="#9a9a9a" /></StatusArrows>
                  <HScrollTrack><HThumb /></HScrollTrack>
                  <StatusArrows $ml={0} $w={24}><Chevron dir="right" c="#9a9a9a" /></StatusArrows>
                </StatusBar>
              </CanvasCol>
              <VScroll>
                <svg width="14" height="14" viewBox="0 0 14 14" fill="none" stroke="#8a8a8a" strokeWidth="1.800"><path d="M1 10l6-6 6 6" /></svg>
                <VThumb />
                <svg width="14" height="14" viewBox="0 0 14 14" fill="none" stroke="#8a8a8a" strokeWidth="1.800"><path d="M1 4l6 6 6-6" /></svg>
              </VScroll>
            </CanvasRow>
          </Centre>
          <RightDock>
            <CollapseStrip $end>
              <span>‹‹</span>
              <span>››</span>
            </CollapseStrip>
            <DockColumns>
              <RightIcons />
              <PanelStack>
                <SwatchesPanel />
                <ColorPanel />
                <LayersPanel />
              </PanelStack>
            </DockColumns>
          </RightDock>
        </Body>
      </AppWindow>
      <FileMenuPanel />
    </Screen>
  );
}
